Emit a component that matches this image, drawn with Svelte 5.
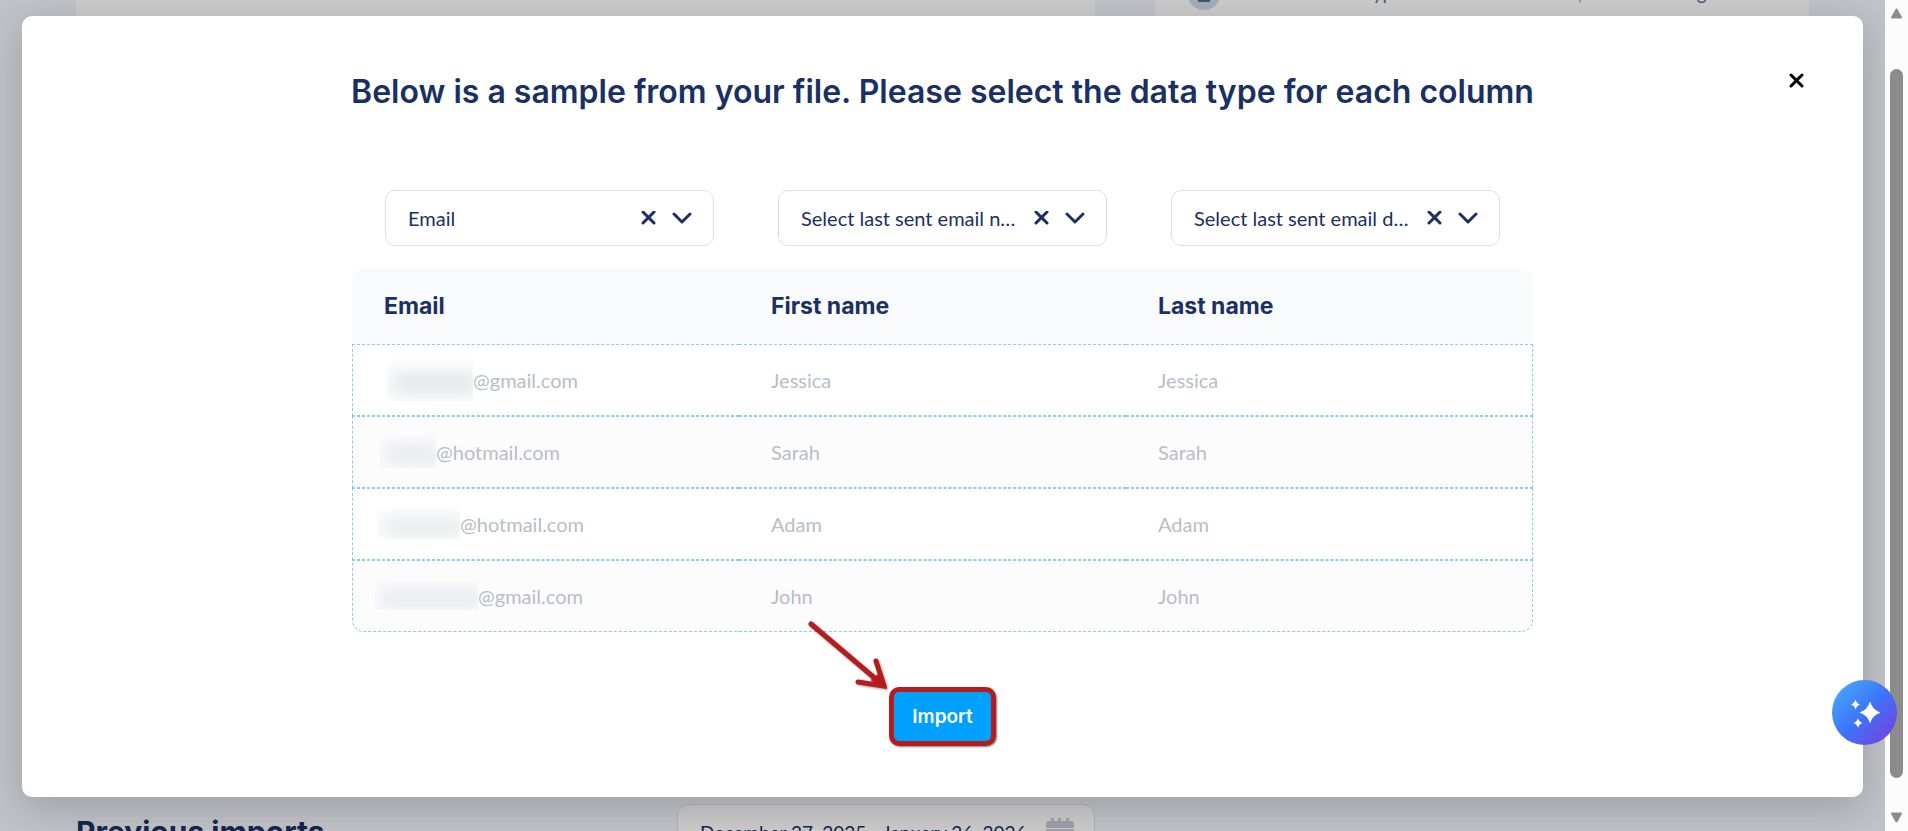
<script lang="ts">
	let columns = [
		{ id: 'col-1', label: 'Email', title: 'Email' },
		{ id: 'col-2', label: 'Select last sent email n…', title: 'First name' },
		{ id: 'col-3', label: 'Select last sent email d…', title: 'Last name' }
	];

	// mask: width of the hidden local part, lead: how far it sticks out to the left
	let rows = [
		{ mask: 86, lead: 3, height: 44, domain: '@gmail.com', name: 'Jessica' },
		{ mask: 56, lead: -4, height: 32, domain: '@hotmail.com', name: 'Sarah' },
		{ mask: 83, lead: -7, height: 32, domain: '@hotmail.com', name: 'Adam' },
		{ mask: 103, lead: -9, height: 28, domain: '@gmail.com', name: 'John' }
	];
</script>

<div class="screen">
	<div class="viewport">
		<main class="page">
			<div class="cards">
				<section class="card"></section>
				<section class="card steps">
					<div class="step">
						<span class="badge">2</span>
						<span>Select the data type for each column in it, start matching</span>
					</div>
				</section>
			</div>
			<div class="cards">
				<div class="history">
					<h2>Previous imports</h2>
					<button class="dates" type="button">
						<span>December 27, 2025 - January 26, 2026</span>
						<svg width="28" height="28" viewBox="0 0 28 28" aria-hidden="true">
							<path d="M5 0h3v3h4V0h3v3h5V0h3v3h2a3 3 0 0 1 3 3v4H0V6a3 3 0 0 1 3-3h2z" fill="#c3cad8" />
							<path d="M1 12h26v15H1z" fill="none" stroke="#c3cad8" stroke-width="2" />
						</svg>
					</button>
				</div>
			</div>
		</main>

		<div class="backdrop">
			<div class="modal" role="dialog" aria-modal="true" aria-labelledby="modal-title">
				<button class="close" type="button" aria-label="Close">
					<svg width="15" height="15" viewBox="0 0 15 15" aria-hidden="true">
						<path d="M2 2l11 11M13 2L2 13" />
					</svg>
				</button>

				<h1 id="modal-title">Below is a sample from your file. Please select the data type for each column</h1>

				<div class="selects">
					{#each columns as column}
						<div class="field">
							<select id={column.id} aria-label="Data type for {column.title}">
								<option>{column.label}</option>
							</select>
							<button type="button" aria-label="Clear">
								<svg width="15" height="15" viewBox="0 0 15 15" aria-hidden="true">
									<path d="M2 1l11 11M13 1L2 12" />
								</svg>
							</button>
							<svg class="chevron" width="20" height="12" viewBox="0 0 20 12" aria-hidden="true">
								<path d="M2 2l8 8 8-8" />
							</svg>
						</div>
					{/each}
				</div>

				<table>
					<thead>
						<tr>
							{#each columns as column}
								<th scope="col">{column.title}</th>
							{/each}
						</tr>
					</thead>
					<tbody>
						{#each rows as row}
							<tr>
								<td>
									<div class="email">
										<span class="mask" style="width: {row.mask}px; height: {row.height}px; margin-left: {row.lead}px"></span>
										<span>{row.domain}</span>
									</div>
								</td>
								<td>{row.name}</td>
								<td>{row.name}</td>
							</tr>
						{/each}
					</tbody>
				</table>

				<div class="actions">
					<button class="import" type="button">Import</button>
					<svg class="arrow" width="84" height="72" viewBox="0 0 84 72" aria-hidden="true">
						<path d="M4 4l73 62M69 41l8 25-26-4" />
						<path class="tip" d="M65 60l14 8-5-15z" />
					</svg>
				</div>
			</div>
		</div>
	</div>

	<div class="scrollbar" aria-hidden="true">
		<svg width="13" height="11" viewBox="0 0 13 11"><path d="M6.500 1.500l4.500 8h-9z" /></svg>
		<div class="thumb"></div>
		<svg width="13" height="11" viewBox="0 0 13 11"><path d="M6.500 9.500l4.500-8h-9z" /></svg>
	</div>

	<button class="assistant" type="button" aria-label="Assistant">
		<svg width="30" height="30" viewBox="0 0 30 30" aria-hidden="true">
			<path d="M20 3.500Q22.500 12 30.500 14.500Q22.500 17 20 25.500Q17.500 17 9.500 14.500Q17.500 12 20 3.500z" />
			<path d="M5.500 1.500Q6.500 5.500 10 6.500Q6.500 7.500 5.500 11.500Q4.500 7.500 1 6.500Q4.500 5.500 5.500 1.500z" />
			<path d="M8 20Q9 24 12.500 25Q9 26 8 30Q7 26 3.500 25Q7 24 8 20z" />
		</svg>
	</button>
</div>

<style>
	:global(body) {
		margin: 0;
		background: #f3f4fa;
	}

	.screen {
		position: relative;
		display: flex;
		height: 100vh;
		overflow: hidden;
		font-family: Lato, sans-serif;
		font-size: 20px;
		color: #1a3064;
	}

	button,
	select {
		font: inherit;
		color: inherit;
		background: none;
		border: 0;
		padding: 0;
		margin: 0;
		cursor: pointer;
	}

	svg {
		display: block;
		flex: none;
	}

	.viewport {
		position: relative;
		flex: 1;
		min-width: 0;
		overflow: hidden;
	}

	.page {
		display: flex;
		flex-direction: column;
		gap: 40px;
		padding: 0 76px;
		font-size: 19px;
	}

	.cards {
		display: grid;
		grid-template-columns: 1019fr 654fr;
		gap: 60px;
	}

	.card {
		background: #fff;
		min-height: calc(100vh - 67px);
	}

	.step {
		display: flex;
		align-items: flex-start;
		gap: 16px;
		margin: -24px 0 0 32px;
		line-height: 34px;
		color: #5a6c94;
	}

	.badge {
		width: 34px;
		border-radius: 50%;
		background: #cddbe8;
		text-align: center;
		font-size: 24px;
		font-weight: 700;
	}

	.history {
		display: flex;
		align-items: center;
		justify-content: space-between;
	}

	h2 {
		margin: 0;
		font: 700 30px/36px Inter, sans-serif;
	}

	.dates {
		display: flex;
		align-items: center;
		justify-content: space-between;
		box-sizing: border-box;
		width: 418px;
		height: 56px;
		padding: 0 20px 0 22px;
		background: #fff;
		border: 1px solid #dcdfe4;
		border-radius: 12px;
	}

	.backdrop {
		position: absolute;
		inset: 0;
		padding: 16px 22px 34px;
		background: rgba(0, 0, 0, 0.2);
	}

	.modal {
		position: relative;
		box-sizing: border-box;
		min-height: 100%;
		padding: 52px 32px 50px;
		background: #fff;
		border-radius: 10px;
		box-shadow: 0 10px 40px rgba(0, 0, 0, 0.2);
	}

	.close {
		position: absolute;
		top: 57px;
		right: 59px;
	}

	.close path {
		stroke: #000;
		stroke-width: 3;
		stroke-linecap: round;
	}

	h1 {
		margin: 0 0 74px;
		font: 600 32px/48px Inter, sans-serif;
		text-align: center;
	}

	.selects {
		display: grid;
		grid-template-columns: repeat(3, 1fr);
		gap: 64px;
		max-width: 1115px;
		margin: 0 auto 22px;
	}

	.field {
		display: flex;
		align-items: center;
		box-sizing: border-box;
		height: 56px;
		padding: 0 21px 0 22px;
		border: 1px solid #dddfe3;
		border-radius: 10px;
	}

	.field select {
		flex: 1;
		min-width: 0;
		height: 100%;
		appearance: none;
	}

	.field path {
		fill: none;
		stroke: #1a3064;
		stroke-width: 3;
		stroke-linecap: round;
		stroke-linejoin: round;
	}

	.chevron {
		margin-left: 16px;
		pointer-events: none;
	}

	table {
		width: 100%;
		max-width: 1181px;
		margin: 0 auto;
		table-layout: fixed;
		border-spacing: 0;
		text-align: left;
	}

	th,
	td {
		box-sizing: border-box;
		padding: 0 0 0 32px;
	}

	th {
		height: 76px;
		background: #f9fafc;
		font: 700 23px/28px Inter, sans-serif;
	}

	th:not(:last-child) {
		width: 387px;
	}

	th:first-child {
		border-top-left-radius: 12px;
	}

	th:last-child {
		border-top-right-radius: 12px;
	}

	td {
		height: 72px;
		border: 0 dashed #8ccbea;
		border-width: 1px 0;
		color: #b9bdc8;
	}

	td:first-child {
		padding-left: 31px;
		border-left-width: 1px;
	}

	td:last-child {
		border-right-width: 1px;
	}

	tr:nth-child(even) td {
		background: #fcfcfd;
	}

	tr:last-child td:first-child {
		border-bottom-left-radius: 12px;
	}

	tr:last-child td:last-child {
		border-bottom-right-radius: 12px;
	}

	.email {
		display: flex;
		align-items: center;
		height: 44px;
	}

	.mask {
		position: relative;
		overflow: hidden;
	}

	.mask::before {
		content: '';
		position: absolute;
		inset: 30% -6px 15% 4px;
		background: #e4e6e9;
		filter: blur(9px);
	}

	.actions {
		position: relative;
		width: 107px;
		margin: 55px auto 0;
	}

	.import {
		box-sizing: border-box;
		width: 100%;
		height: 59px;
		background: #00a0ff;
		border: 5px solid #b71c1c;
		border-radius: 10px;
		box-shadow: 1px 1px 2px rgba(0, 0, 0, 0.5);
		color: #fff;
		font: 600 19px/24px Inter, sans-serif;
	}

	.arrow {
		position: absolute;
		left: -82px;
		bottom: 54px;
		filter: drop-shadow(1px 1px 1px rgba(0, 0, 0, 0.4));
	}

	.arrow path {
		fill: none;
		stroke: #b71c1c;
		stroke-width: 5;
		stroke-linecap: round;
		stroke-linejoin: round;
	}

	.arrow .tip {
		fill: #b71c1c;
		stroke-width: 2;
	}

	.scrollbar {
		display: flex;
		flex-direction: column;
		align-items: center;
		box-sizing: border-box;
		width: 23px;
		padding: 8px 0;
		background: #fcfcfc;
	}

	.scrollbar path {
		fill: #8b8b8b;
		stroke: #8b8b8b;
		stroke-width: 2;
		stroke-linejoin: round;
	}

	.thumb {
		flex: 1;
		width: 13px;
		margin: 50px 0 34px;
		background: #8b8b8b;
		border-radius: 7px;
	}

	.assistant {
		position: absolute;
		right: 11px;
		bottom: 86px;
		display: grid;
		place-items: center;
		width: 65px;
		height: 65px;
		border-radius: 50%;
		background: linear-gradient(135deg, #46a6f5 10%, #3c74fb 50%, #7a3fd8 95%);
	}

	.assistant path {
		fill: #fff;
	}
</style>
